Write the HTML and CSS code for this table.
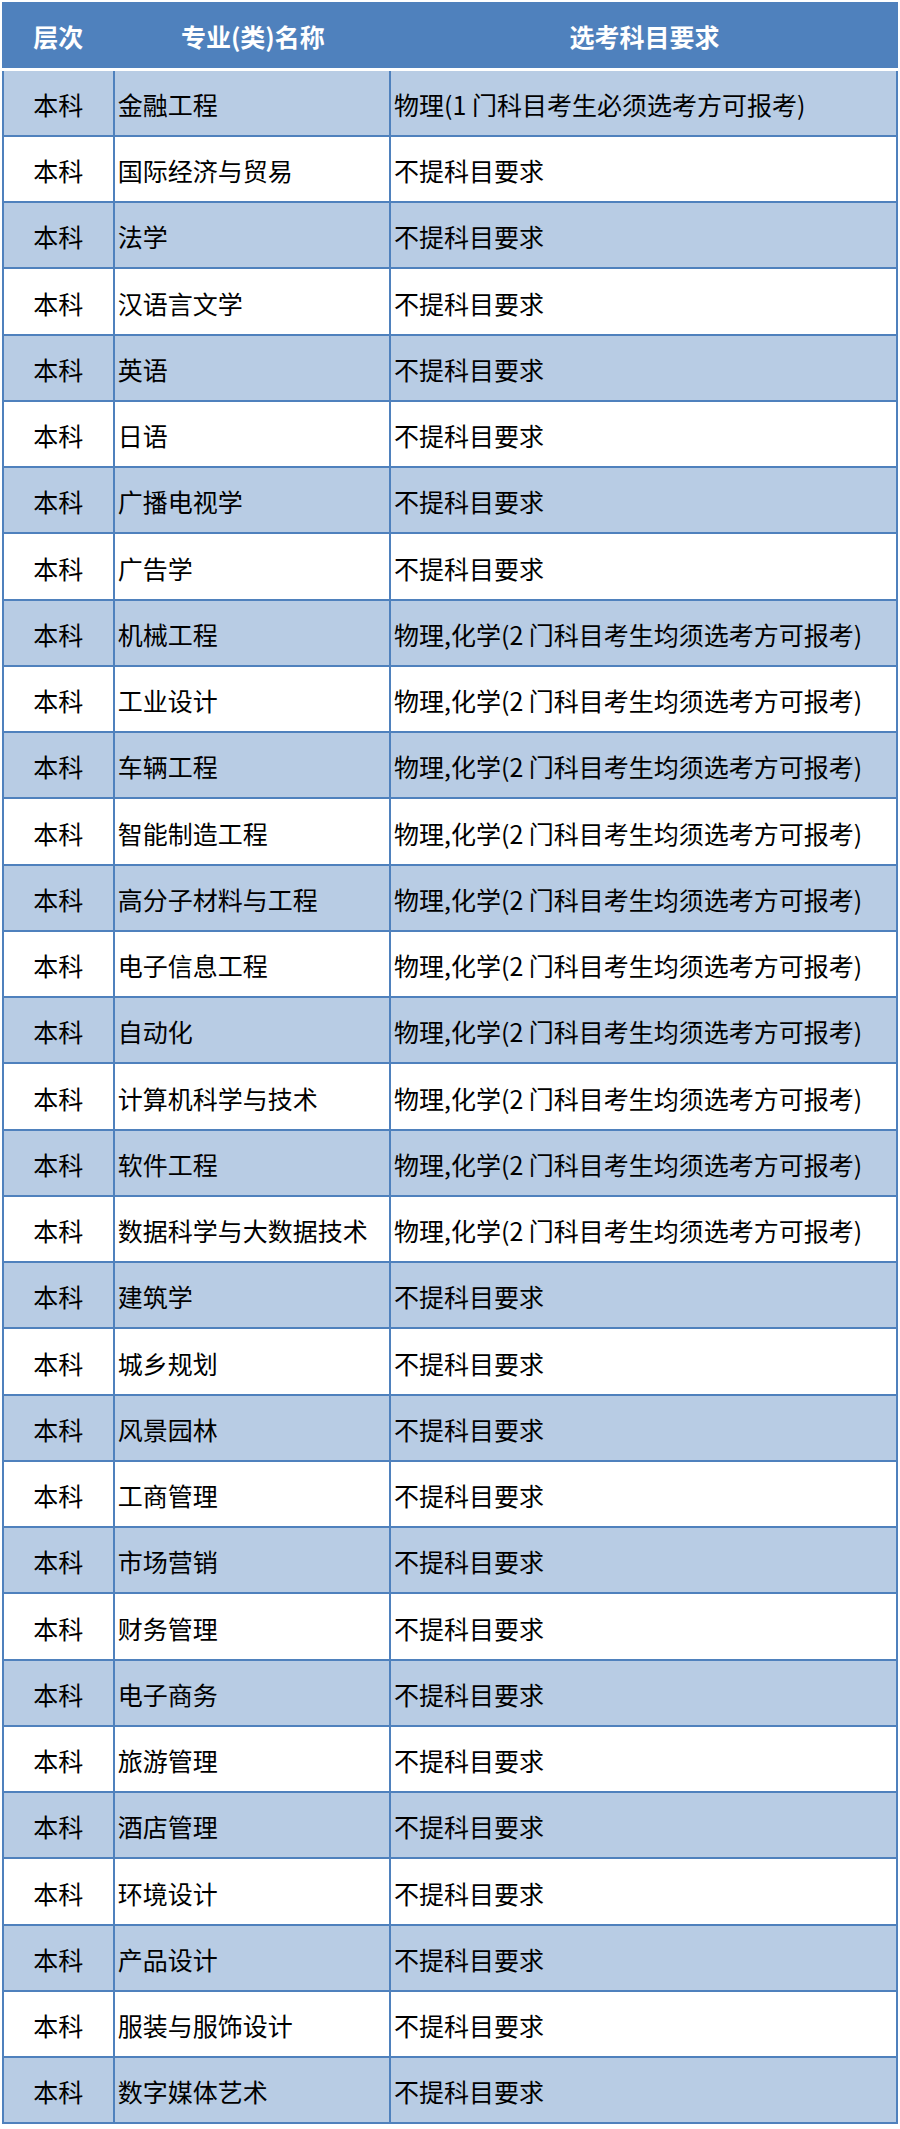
FILE: index.html
```html
<!DOCTYPE html>
<html lang="zh-CN">
<head>
<meta charset="utf-8">
<title>选考科目要求</title>
<link rel="stylesheet" href="styles.css">
</head>
<body>
<div class="wrap">
<table class="subjects">
  <colgroup>
    <col class="c-level">
    <col class="c-major">
    <col class="c-req">
  </colgroup>
  <thead>
    <tr><th>层次</th><th>专业(类)名称</th><th>选考科目要求</th></tr>
  </thead>
  <tbody>
    <tr class="alt"><td class="lvl">本科</td><td>金融工程</td><td>物理(1 门科目考生必须选考方可报考)</td></tr>
    <tr><td class="lvl">本科</td><td>国际经济与贸易</td><td>不提科目要求</td></tr>
    <tr class="alt"><td class="lvl">本科</td><td>法学</td><td>不提科目要求</td></tr>
    <tr><td class="lvl">本科</td><td>汉语言文学</td><td>不提科目要求</td></tr>
    <tr class="alt"><td class="lvl">本科</td><td>英语</td><td>不提科目要求</td></tr>
    <tr><td class="lvl">本科</td><td>日语</td><td>不提科目要求</td></tr>
    <tr class="alt"><td class="lvl">本科</td><td>广播电视学</td><td>不提科目要求</td></tr>
    <tr><td class="lvl">本科</td><td>广告学</td><td>不提科目要求</td></tr>
    <tr class="alt"><td class="lvl">本科</td><td>机械工程</td><td>物理,化学(2 门科目考生均须选考方可报考)</td></tr>
    <tr><td class="lvl">本科</td><td>工业设计</td><td>物理,化学(2 门科目考生均须选考方可报考)</td></tr>
    <tr class="alt"><td class="lvl">本科</td><td>车辆工程</td><td>物理,化学(2 门科目考生均须选考方可报考)</td></tr>
    <tr><td class="lvl">本科</td><td>智能制造工程</td><td>物理,化学(2 门科目考生均须选考方可报考)</td></tr>
    <tr class="alt"><td class="lvl">本科</td><td>高分子材料与工程</td><td>物理,化学(2 门科目考生均须选考方可报考)</td></tr>
    <tr><td class="lvl">本科</td><td>电子信息工程</td><td>物理,化学(2 门科目考生均须选考方可报考)</td></tr>
    <tr class="alt"><td class="lvl">本科</td><td>自动化</td><td>物理,化学(2 门科目考生均须选考方可报考)</td></tr>
    <tr><td class="lvl">本科</td><td>计算机科学与技术</td><td>物理,化学(2 门科目考生均须选考方可报考)</td></tr>
    <tr class="alt"><td class="lvl">本科</td><td>软件工程</td><td>物理,化学(2 门科目考生均须选考方可报考)</td></tr>
    <tr><td class="lvl">本科</td><td>数据科学与大数据技术</td><td>物理,化学(2 门科目考生均须选考方可报考)</td></tr>
    <tr class="alt"><td class="lvl">本科</td><td>建筑学</td><td>不提科目要求</td></tr>
    <tr><td class="lvl">本科</td><td>城乡规划</td><td>不提科目要求</td></tr>
    <tr class="alt"><td class="lvl">本科</td><td>风景园林</td><td>不提科目要求</td></tr>
    <tr><td class="lvl">本科</td><td>工商管理</td><td>不提科目要求</td></tr>
    <tr class="alt"><td class="lvl">本科</td><td>市场营销</td><td>不提科目要求</td></tr>
    <tr><td class="lvl">本科</td><td>财务管理</td><td>不提科目要求</td></tr>
    <tr class="alt"><td class="lvl">本科</td><td>电子商务</td><td>不提科目要求</td></tr>
    <tr><td class="lvl">本科</td><td>旅游管理</td><td>不提科目要求</td></tr>
    <tr class="alt"><td class="lvl">本科</td><td>酒店管理</td><td>不提科目要求</td></tr>
    <tr><td class="lvl">本科</td><td>环境设计</td><td>不提科目要求</td></tr>
    <tr class="alt"><td class="lvl">本科</td><td>产品设计</td><td>不提科目要求</td></tr>
    <tr><td class="lvl">本科</td><td>服装与服饰设计</td><td>不提科目要求</td></tr>
    <tr class="alt"><td class="lvl">本科</td><td>数字媒体艺术</td><td>不提科目要求</td></tr>
  </tbody>
</table>
</div>
</body>
</html>
```

FILE: styles.css
```css
html, body {
  margin: 0;
  padding: 0;
  background: #ffffff;
}

.wrap {
  padding: 2px 2px 0 2px;
}

.subjects {
  width: 896px;
  table-layout: fixed;
  border-collapse: separate;
  border-spacing: 0;
  font-family: "Microsoft YaHei", "Noto Sans CJK SC", "Noto Sans", sans-serif;
  font-size: 25px;
  color: #000000;
}

.c-level { width: 112.7px; }
.c-major { width: 276.3px; }
.c-req { width: 507px; }

.subjects th {
  background: #4f81bd;
  color: #ffffff;
  font-weight: bold;
  text-align: center;
  height: 69px;
  padding: 2px 0 0 0;
  box-sizing: border-box;
  border-bottom: 3px solid #ffffff;
  line-height: 1;
}

.subjects td {
  box-sizing: border-box;
  height: 66px;
  padding: 3px 0 0 3px;
  border-right: 2px solid #4f81bd;
  border-bottom: 2px solid #4f81bd;
  white-space: nowrap;
  overflow: hidden;
  line-height: 1;
  vertical-align: middle;
}

.subjects tbody tr:nth-child(4n) td {
  height: 67px;
}

.subjects td.lvl {
  border-left: 2px solid #4f81bd;
  text-align: center;
  padding-left: 0;
}

.subjects tr.alt td {
  background: #b8cce4;
}
```
